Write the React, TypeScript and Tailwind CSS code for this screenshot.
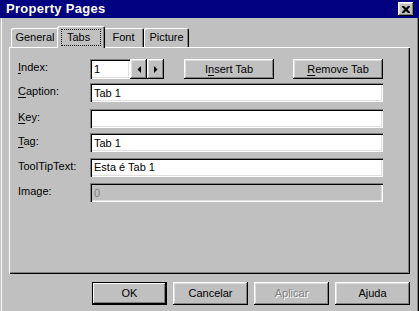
import React from "react"

const raised =
    "bg-[#c0c0c0] shadow-[inset_-1px_-1px_0_#000,inset_1px_1px_0_#fff,inset_-2px_-2px_0_#808080,inset_2px_2px_0_#dfdfdf]"
const sunken =
    "shadow-[inset_1px_1px_0_#808080,inset_2px_2px_0_#000,inset_-1px_-1px_0_#fff,inset_-2px_-2px_0_#dfdfdf]"

function Mn({ children }: { children: React.ReactNode }) {
    return <span className="underline underline-offset-[2px] decoration-1">{children}</span>
}

function Field({ value, disabled = false, className = "" }: { value: string; disabled?: boolean; className?: string }) {
    return (
        <div
            className={`h-[19px] flex items-center pl-[4px] ${sunken} ${disabled ? "bg-[#c0c0c0] text-[#808080]" : "bg-white text-black"} ${className}`}
        >
            {value}
        </div>
    )
}

function Row({ label, children, className = "" }: { label: React.ReactNode; children: React.ReactNode; className?: string }) {
    return (
        <div className={`flex items-center ${className}`}>
            <div className="w-[72px] pb-[3px]">{label}</div>
            {children}
        </div>
    )
}

function Tab({ label, width }: { label: string; width: string }) {
    return (
        <div
            className={`${width} h-[19px] flex items-center justify-center rounded-t-[2px] bg-[#c0c0c0] shadow-[inset_1px_1px_0_#fff,inset_-1px_0_0_#000,inset_-2px_0_0_#808080]`}
        >
            {label}
        </div>
    )
}

function SpinArrow({ dir }: { dir: "left" | "right" }) {
    return (
        <div className={`w-[17px] h-[20px] flex items-center justify-center ${raised}`}>
            <svg width="4" height="7" viewBox="0 0 4 7">
                {dir === "left" ? (
                    <polygon points="4,0 4,7 0.5,3.5" fill="#000" />
                ) : (
                    <polygon points="0,0 0,7 3.5,3.5" fill="#000" />
                )}
            </svg>
        </div>
    )
}

function DialogButton({ label, isDefault = false, disabled = false }: { label: string; isDefault?: boolean; disabled?: boolean }) {
    return (
        <div
            className={`w-[75px] h-[23px] flex items-center justify-center ${
                isDefault
                    ? "bg-[#c0c0c0] border border-black shadow-[inset_-1px_-1px_0_#000,inset_1px_1px_0_#fff,inset_-2px_-2px_0_#808080]"
                    : raised
            } ${disabled ? "text-[#808080] [text-shadow:1px_1px_0_#fff]" : "text-black"}`}
        >
            {label}
        </div>
    )
}

export default function App() {
    return (
        <div
            className="w-[419px] h-[311px] bg-[#c0c0c0] flex flex-col text-[11px] text-black shadow-[inset_1px_0_0_#c0c0c0,inset_2px_0_0_#fff,inset_-1px_0_0_#000,inset_-2px_0_0_#808080] overflow-hidden"
            style={{ fontFamily: '"Liberation Sans", Arial, sans-serif' }}
        >
            {/* title bar */}
            <div className="h-[18px] bg-[#000080] flex items-center justify-between pl-[6px] pr-[5px]">
                <span className="text-white font-bold text-[13px] tracking-[0.3px]">Property Pages</span>
                <div className={`w-[16px] h-[14px] flex items-center justify-center ${raised}`}>
                    <svg width="8" height="7" viewBox="0 0 8 7">
                        <path d="M0 0h2l2 2 2-2h2v1L5.5 3.5 8 6v1H6L4 5 2 7H0V6l2.5-2.5L0 1z" fill="#000" />
                    </svg>
                </div>
            </div>

            <div className="flex-1 flex flex-col px-[9px]">
                {/* tabs */}
                <div className="flex items-end h-[21px] mt-[8px] pl-[2px]">
                    <Tab label="General" width="w-[48px]" />
                    <div className="relative z-10 -mx-[2px] -mb-[1px] w-[48px] h-[22px] flex items-start justify-center pt-[3px] rounded-t-[2px] bg-[#c0c0c0] shadow-[inset_1px_1px_0_#fff,inset_-1px_0_0_#000,inset_-2px_0_0_#808080]">
                        <span className="border border-dotted border-black w-[40px] pl-[5px] h-[17px] leading-[15px]">Tabs</span>
                    </div>
                    <Tab label="Font" width="w-[41px]" />
                    <Tab label="Picture" width="w-[45px]" />
                </div>

                {/* panel */}
                <div className="h-[227px] pl-[9px] pt-[12px] shadow-[inset_1px_1px_0_#fff,inset_-1px_-1px_0_#000,inset_-2px_-2px_0_#808080]">
                    <Row label={<><Mn>I</Mn>ndex:</>}>
                        <div className={`w-[40px] h-[20px] flex items-center pl-[4px] bg-white ${sunken}`}>1</div>
                        <SpinArrow dir="left" />
                        <SpinArrow dir="right" />
                        <div className={`ml-[20px] w-[90px] h-[20px] flex items-center justify-center ${raised}`}>
                            <span>I<Mn>n</Mn>sert Tab</span>
                        </div>
                        <div className={`ml-[19px] w-[90px] h-[20px] flex items-center justify-center ${raised}`}>
                            <span><Mn>R</Mn>emove Tab</span>
                        </div>
                    </Row>
                    <Row label={<><Mn>C</Mn>aption:</>} className="mt-[4px]">
                        <Field value="Tab 1" className="w-[293px]" />
                    </Row>
                    <Row label={<><Mn>K</Mn>ey:</>} className="mt-[6px]">
                        <Field value="" className="w-[293px]" />
                    </Row>
                    <Row label={<><Mn>T</Mn>ag:</>} className="mt-[5px]">
                        <Field value="Tab 1" className="w-[293px]" />
                    </Row>
                    <Row label="ToolTipText:" className="mt-[5px]">
                        <Field value="Esta é Tab 1" className="w-[293px]" />
                    </Row>
                    <Row label="Image:" className="mt-[6px]">
                        <Field value="0" disabled className="w-[293px]" />
                    </Row>
                </div>

                {/* dialog buttons */}
                <div className="flex justify-end gap-[6px] mt-[8px]">
                    <DialogButton label="OK" isDefault />
                    <DialogButton label="Cancelar" />
                    <DialogButton label="Aplicar" disabled />
                    <DialogButton label="Ajuda" />
                </div>
            </div>
        </div>
    )
}
